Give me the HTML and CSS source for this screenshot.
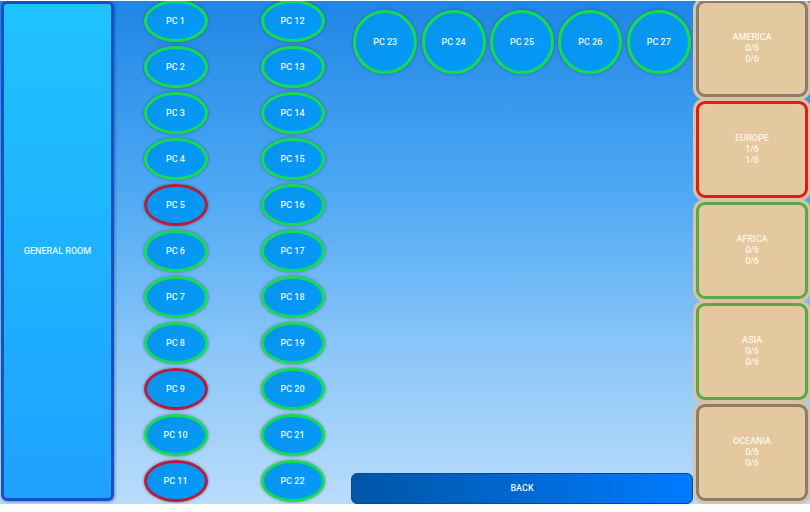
FILE: index.html
```
<!DOCTYPE html>
<html lang="en">
<head>
<meta charset="utf-8">
<title>General room</title>
<link rel="stylesheet" href="styles.css">
</head>
<body>
<main class="board">
  <button class="room" type="button">GENERAL ROOM</button>
  <div class="column">
    <button class="pc" type="button">PC 1</button>
    <button class="pc" type="button">PC 2</button>
    <button class="pc" type="button">PC 3</button>
    <button class="pc" type="button">PC 4</button>
    <button class="pc busy" type="button">PC 5</button>
    <button class="pc" type="button">PC 6</button>
    <button class="pc" type="button">PC 7</button>
    <button class="pc" type="button">PC 8</button>
    <button class="pc busy" type="button">PC 9</button>
    <button class="pc" type="button">PC 10</button>
    <button class="pc busy" type="button">PC 11</button>
  </div>
  <div class="column">
    <button class="pc" type="button">PC 12</button>
    <button class="pc" type="button">PC 13</button>
    <button class="pc" type="button">PC 14</button>
    <button class="pc" type="button">PC 15</button>
    <button class="pc" type="button">PC 16</button>
    <button class="pc" type="button">PC 17</button>
    <button class="pc" type="button">PC 18</button>
    <button class="pc" type="button">PC 19</button>
    <button class="pc" type="button">PC 20</button>
    <button class="pc" type="button">PC 21</button>
    <button class="pc" type="button">PC 22</button>
  </div>
  <section class="center">
    <div class="row">
      <button class="pc round" type="button">PC 23</button>
      <button class="pc round" type="button">PC 24</button>
      <button class="pc round" type="button">PC 25</button>
      <button class="pc round" type="button">PC 26</button>
      <button class="pc round" type="button">PC 27</button>
    </div>
    <button class="back" type="button">BACK</button>
  </section>
  <div class="zones">
    <button class="zone" type="button"><span>AMERICA</span><span>0/6</span><span>0/6</span></button>
    <button class="zone full" type="button"><span>EUROPE</span><span>1/6</span><span>1/6</span></button>
    <button class="zone free" type="button"><span>AFRICA</span><span>0/6</span><span>0/6</span></button>
    <button class="zone free" type="button"><span>ASIA</span><span>0/6</span><span>0/6</span></button>
    <button class="zone" type="button"><span>OCEANIA</span><span>0/6</span><span>0/6</span></button>
  </div>
</main>
</body>
</html>
```
FILE: styles.css
```
* {
  box-sizing: border-box;
}

body {
  margin: 0;
  padding-top: 1px;
  background: #fdfefd;
  font-family: Roboto, "Liberation Sans", sans-serif;
}

button {
  margin: 0;
  padding: 0;
  color: #e4f6ff;
  font: 500 9px/11px Roboto, "Liberation Sans", sans-serif;
  cursor: pointer;
}

.board {
  display: grid;
  grid-template-columns: 117fr 117fr 117fr 342fr 117fr;
  overflow: hidden;
  background: linear-gradient(#1f86e6, #4ea9f4 38%, #8cc6f8 70%, #badcfb);
}

.room {
  margin: 0 3px 3px 1px;
  border: 3px solid #1550c4;
  border-radius: 6px;
  background: linear-gradient(#20c2ff, #1ea2ff);
  box-shadow: 1px 1px 3px rgba(40, 60, 110, 0.5);
}

.column {
  display: flex;
  flex-direction: column;
  align-items: center;
  gap: 4px;
  margin-top: -1px;
  padding-bottom: 2px;
}

.pc {
  width: 64px;
  height: 42px;
  border: 3px solid #14dc50;
  border-radius: 50%;
  background: linear-gradient(135deg, #0a92ec, #039cfa);
  background-origin: border-box;
  box-shadow: 0 0 3px rgba(50, 70, 90, 0.7);
}

.busy {
  border-color: #b81c3c;
}

.center {
  display: flex;
  flex-direction: column;
  justify-content: space-between;
}

.row {
  display: flex;
  justify-content: space-around;
  padding-top: 9px;
}

.round {
  height: 64px;
}

.back {
  height: 31px;
  border: 1px solid #064a9c;
  border-radius: 6px;
  background: linear-gradient(90deg, #0055a5, #007bff);
  background-origin: border-box;
}

.zones {
  display: flex;
  flex-direction: column;
  gap: 4px;
  margin-top: -1px;
  padding: 0 2px 3px 3px;
}

.zone {
  display: flex;
  flex: 1;
  flex-direction: column;
  align-items: center;
  justify-content: center;
  border: 3px solid #8b7c6c;
  border-radius: 9px;
  background: #e4c8a0;
  box-shadow: 0 0 0 3px #d8c4a4;
  color: #fff6e6;
}

.full {
  border-color: #e01c14;
}

.free {
  border-color: #5aa848;
}
```
